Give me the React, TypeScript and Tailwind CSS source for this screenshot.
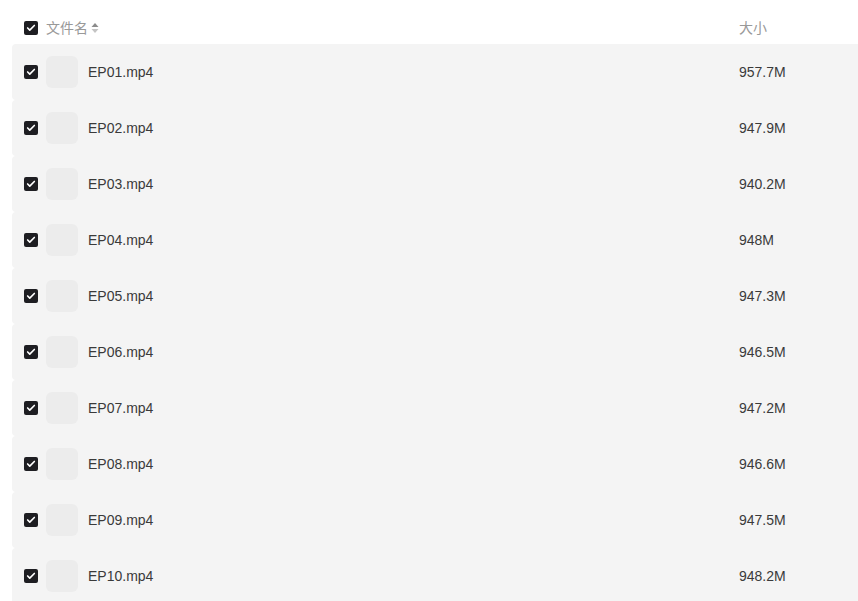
import { Check } from 'lucide-react';

type FileRow = {
  name: string;
  size: string;
};

const files: FileRow[] = [
  { name: 'EP01.mp4', size: '957.7M' },
  { name: 'EP02.mp4', size: '947.9M' },
  { name: 'EP03.mp4', size: '940.2M' },
  { name: 'EP04.mp4', size: '948M' },
  { name: 'EP05.mp4', size: '947.3M' },
  { name: 'EP06.mp4', size: '946.5M' },
  { name: 'EP07.mp4', size: '947.2M' },
  { name: 'EP08.mp4', size: '946.6M' },
  { name: 'EP09.mp4', size: '947.5M' },
  { name: 'EP10.mp4', size: '948.2M' },
];

const CheckBox = () => (
  <span className="flex h-[14px] w-[14px] items-center justify-center rounded-[2px] bg-[#1e1e22]">
    <Check className="h-[10px] w-[10px] text-white" strokeWidth={4} />
  </span>
);

const SortIcon = () => (
  <svg width="8" height="12" viewBox="0 0 8 12" className="ml-[3px]">
    <path d="M4 1 L7.5 5 H0.5 Z" fill="#8c8c8c" />
    <path d="M4 11 L7.5 7 H0.5 Z" fill="#c4c4c4" />
  </svg>
);

export default function App() {
  return (
    <div
      className="h-[601px] w-[858px] overflow-hidden bg-white pl-3"
      style={{ fontFamily: '"Liberation Sans", Arial, "Noto Sans CJK SC", sans-serif' }}
    >
      <div className="w-[900px]">
        <div className="flex h-[44px] items-center pl-3 pt-[12px] text-sm text-[#999999]">
          <CheckBox />
          <div className="ml-2 flex w-[693px] items-center">
            文件名
            <SortIcon />
          </div>
          <div>大小</div>
        </div>
        {files.map((file) => (
          <div
            key={file.name}
            className="flex h-[56px] items-center rounded-l-[4px] bg-[#f4f4f4] pl-3 text-sm text-[#3a3a3a]"
          >
            <CheckBox />
            <div className="ml-2 h-[32px] w-[32px] rounded-[6px] bg-[#ececec]" />
            <div className="ml-[10px] w-[651px]">{file.name}</div>
            <div>{file.size}</div>
          </div>
        ))}
      </div>
    </div>
  );
}
